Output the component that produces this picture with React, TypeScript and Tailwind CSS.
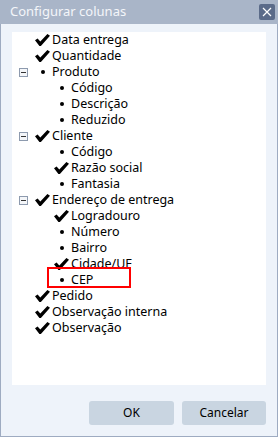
import React from "react";

type Row = { level: 0 | 1; mark: "check" | "bullet"; exp?: boolean; text: string; hl?: boolean };

const rows: Row[] = [
  { level: 0, mark: "check", text: "Data entrega" },
  { level: 0, mark: "check", text: "Quantidade" },
  { level: 0, mark: "bullet", exp: true, text: "Produto" },
  { level: 1, mark: "bullet", text: "Código" },
  { level: 1, mark: "bullet", text: "Descrição" },
  { level: 1, mark: "bullet", text: "Reduzido" },
  { level: 0, mark: "check", exp: true, text: "Cliente" },
  { level: 1, mark: "bullet", text: "Código" },
  { level: 1, mark: "check", text: "Razão social" },
  { level: 1, mark: "bullet", text: "Fantasia" },
  { level: 0, mark: "check", exp: true, text: "Endereço de entrega" },
  { level: 1, mark: "check", text: "Logradouro" },
  { level: 1, mark: "bullet", text: "Número" },
  { level: 1, mark: "bullet", text: "Bairro" },
  { level: 1, mark: "check", text: "Cidade/UF" },
  { level: 1, mark: "bullet", text: "CEP", hl: true },
  { level: 0, mark: "check", text: "Pedido" },
  { level: 0, mark: "check", text: "Observação interna" },
  { level: 0, mark: "check", text: "Observação" },
];

function Check() {
  return (
    <svg width="15" height="12" viewBox="0 0 15 12" className="block">
      <polygon points="0,6.2 2.6,4.4 5.3,7.4 12.4,0 15,1.8 5.9,12 4.4,12" fill="#000" />
    </svg>
  );
}

function Expander() {
  return (
    <span className="flex h-[9px] w-[9px] items-center justify-center border border-[#8d9aae] bg-[#f4f6f9]">
      <span className="block h-px w-[5px] bg-[#333]" />
    </span>
  );
}

export default function App() {
  return (
    <div
      className="flex h-[437px] w-[278px] flex-col border-x border-b border-[#9eabc1] bg-[#eef3fa]"
      style={{ fontFamily: '"Noto Sans", "Open Sans", sans-serif' }}
    >
      <div className="-mx-px flex h-[24px] shrink-0 items-center justify-between bg-[#a9b5c8] pl-[10px] pr-[3px]">
        <span className="text-[13px] text-[#f4f6fa]">Configurar colunas</span>
        <span className="flex h-[16px] w-[16px] items-center justify-center rounded-[2px] bg-[#5b6b89]">
          <svg width="10" height="10" viewBox="0 0 10 10">
            <path d="M1 1 L9 9 M9 1 L1 9" stroke="#fff" strokeWidth="1.2" />
          </svg>
        </span>
      </div>
      <div className="mx-[11px] mt-[8px] h-[353px] bg-white">
        {rows.map((r, i) => (
          <div key={i} className="relative flex h-[16px] items-center text-[12.5px] leading-none text-black">
            <span className="flex w-[22px] shrink-0 items-center pl-[7px]">{r.exp && <Expander />}</span>
            {r.level === 1 && <span className="w-[19px] shrink-0" />}
            <span className="flex w-[18px] shrink-0 items-center">
              {r.mark === "check" ? (
                <span className="pl-[1px]">
                  <Check />
                </span>
              ) : (
                <span className="ml-[7px] block h-[4px] w-[4px] rounded-full bg-black" />
              )}
            </span>
            <span className="whitespace-nowrap">{r.text}</span>
            {r.hl && (
              <span className="absolute left-[35px] top-[-5px] h-[21px] w-[84px] border-2 border-[#ff0000]" />
            )}
          </div>
        ))}
      </div>
      <div className="mt-[16px] flex justify-end gap-[8px] pr-[11px]">
        <button className="h-[24px] w-[85px] rounded-[3px] bg-[#c9d5e1] text-[12px] text-black">OK</button>
        <button className="h-[24px] w-[84px] rounded-[3px] bg-[#c9d5e1] text-[12px] text-black">Cancelar</button>
      </div>
    </div>
  );
}
